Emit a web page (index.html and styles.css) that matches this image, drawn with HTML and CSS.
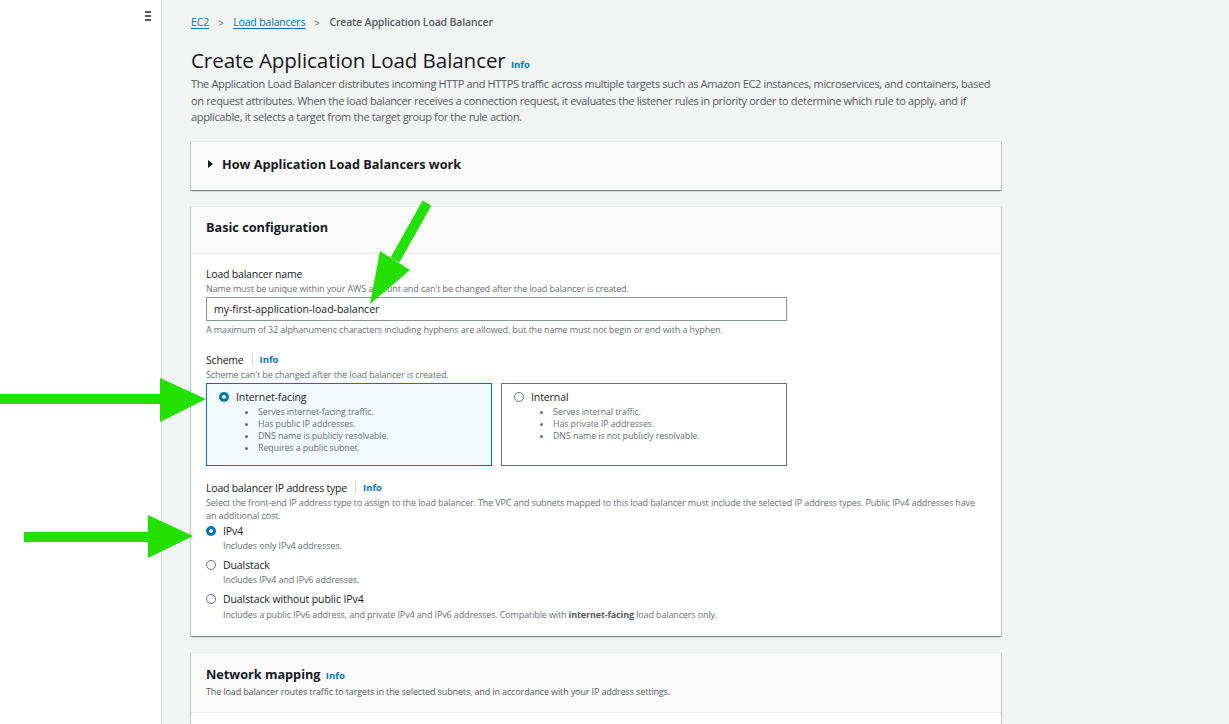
FILE: index.html
```html
<!DOCTYPE html>
<html>
<head>
<meta charset="utf-8">
<link rel="stylesheet" href="styles.css">
</head>
<body>
<div class="app">
  <aside class="sidebar">
    <div class="hamburger"><span></span><span></span><span></span></div>
  </aside>
  <main class="main">
    <nav class="crumbs">
      <a class="crumb-link">EC2</a>
      <span class="chev">&gt;</span>
      <a class="crumb-link">Load balancers</a>
      <span class="chev">&gt;</span>
      <span class="crumb-current">Create Application Load Balancer</span>
    </nav>
    <h1 class="page-title">Create Application Load Balancer <span class="info">Info</span></h1>
    <p class="page-desc">The Application Load Balancer distributes incoming HTTP and HTTPS traffic across multiple targets such as Amazon EC2 instances, microservices, and containers, based on request attributes. When the load balancer receives a connection request, it evaluates the listener rules in priority order to determine which rule to apply, and if applicable, it selects a target from the target group for the rule action.</p>

    <section class="panel panel-collapsed">
      <div class="expander"><span class="tri"></span><span>How Application Load Balancers work</span></div>
    </section>

    <section class="panel">
      <header class="panel-head"><h2>Basic configuration</h2></header>
      <div class="panel-body">
        <div class="field">
          <div class="label">Load balancer name</div>
          <div class="hint">Name must be unique within your AWS account and can't be changed after the load balancer is created.</div>
          <div class="input">my-first-application-load-balancer</div>
          <div class="hint after">A maximum of 32 alphanumeric characters including hyphens are allowed, but the name must not begin or end with a hyphen.</div>
        </div>
        <div class="field">
          <div class="label">Scheme <span class="sep"></span><span class="info">Info</span></div>
          <div class="hint">Scheme can't be changed after the load balancer is created.</div>
          <div class="tiles">
            <div class="tile selected">
              <div class="tile-title"><span class="radio on"></span>Internet-facing</div>
              <ul>
                <li>Serves internet-facing traffic.</li>
                <li>Has public IP addresses.</li>
                <li>DNS name is publicly resolvable.</li>
                <li>Requires a public subnet.</li>
              </ul>
            </div>
            <div class="tile">
              <div class="tile-title"><span class="radio"></span>Internal</div>
              <ul>
                <li>Serves internal traffic.</li>
                <li>Has private IP addresses.</li>
                <li>DNS name is not publicly resolvable.</li>
              </ul>
            </div>
          </div>
        </div>
        <div class="field">
          <div class="label">Load balancer IP address type <span class="sep"></span><span class="info">Info</span></div>
          <div class="hint wide">Select the front-end IP address type to assign to the load balancer. The VPC and subnets mapped to this load balancer must include the selected IP address types. Public IPv4 addresses have an additional cost.</div>
          <div class="radios">
            <div class="ropt">
              <span class="radio on"></span>
              <div><div class="rlabel">IPv4</div><div class="rdesc">Includes only IPv4 addresses.</div></div>
            </div>
            <div class="ropt">
              <span class="radio"></span>
              <div><div class="rlabel">Dualstack</div><div class="rdesc">Includes IPv4 and IPv6 addresses.</div></div>
            </div>
            <div class="ropt">
              <span class="radio"></span>
              <div><div class="rlabel">Dualstack without public IPv4</div><div class="rdesc">Includes a public IPv6 address, and private IPv4 and IPv6 addresses. Compatible with <b>internet-facing</b> load balancers only.</div></div>
            </div>
          </div>
        </div>
      </div>
    </section>

    <section class="panel">
      <header class="panel-head nm">
        <h2>Network mapping <span class="info">Info</span></h2>
        <div class="head-desc">The load balancer routes traffic to targets in the selected subnets, and in accordance with your IP address settings.</div>
      </header>
      <div class="panel-body tall"></div>
    </section>
  </main>
</div>

<svg class="arrow a1" width="80" height="110" viewBox="0 0 80 110">
  <line x1="69" y1="3" x2="37" y2="60" stroke="#22e000" stroke-width="10"/>
  <polygon points="12,104 22,51 52,70" fill="#22e000"/>
</svg>
<svg class="arrow a2" width="210" height="50" viewBox="0 0 210 50">
  <rect x="0" y="16" width="165" height="10" fill="#22e000"/>
  <polygon points="160,0 206,21 160,44" fill="#22e000"/>
</svg>
<svg class="arrow a3" width="200" height="50" viewBox="0 0 200 50">
  <rect x="24" y="20" width="130" height="10" fill="#22e000"/>
  <polygon points="148,3 193,24 148,46" fill="#22e000"/>
</svg>
</body>
</html>
```
FILE: styles.css
```css
* { box-sizing: border-box; }
html, body { margin: 0; padding: 0; }
body {
  font-family: "Open Sans", "Noto Sans", Arial, sans-serif;
  color: #16191f;
  background: #f2f3f3;
  width: 1229px;
  height: 724px;
  overflow: hidden;
  position: relative;
}
.app { display: flex; min-height: 724px; }
.sidebar {
  width: 162px;
  flex: none;
  background: #fff;
  border-right: 1px solid #d5dbdb;
  position: relative;
}
.hamburger {
  position: absolute;
  left: 145px;
  top: 11px;
  display: flex;
  flex-direction: column;
  gap: 2px;
}
.hamburger span { width: 6px; height: 2px; background: #545b64; display: block; }
.main {
  flex: 1;
  padding: 13px 0 0 29px;
  width: 839px;
}
.crumbs {
  display: flex;
  align-items: center;
  font-size: 10.5px;
  letter-spacing: -0.15px;
  height: 18px;
}
.crumb-link { color: #0073bb; text-decoration: underline; text-underline-offset: 2px; }
.chev { color: #545b64; margin: 0 9px; font-size: 11px; transform: scaleX(0.8); }
.crumb-current { color: #545b64; font-weight: 600; }
.page-title {
  font-size: 20.6px;
  font-weight: 400;
  margin: 15px 0 0;
  line-height: 28px;
  letter-spacing: -0.1px;
}
.info { color: #0073bb; font-size: 9.5px; font-weight: 700; letter-spacing: 0; }
.page-title .info { font-size: 9.5px; margin-left: 0; }
.page-desc {
  margin: -3px 0 0;
  width: 812px;
  font-size: 11px;
  line-height: 16.5px;
  color: #545b64;
  letter-spacing: -0.35px;
}
.panel {
  width: 810px;
  background: #fff;
  box-shadow: 0 1px 1px 0 rgba(0,28,36,0.3), 1px 1px 1px 0 rgba(0,28,36,0.15), -1px 1px 1px 0 rgba(0,28,36,0.15);
  border-top: 1px solid #eaeded;
  margin-top: 16px;
}
.panel-collapsed { margin-top: 15px; background: #fafafa; height: 49px; }
.expander {
  display: flex;
  align-items: center;
  height: 45px;
  padding-left: 17px;
  font-size: 12.7px;
  font-weight: 700;
}
.tri {
  width: 0; height: 0;
  border-left: 5px solid #16191f;
  border-top: 4px solid transparent;
  border-bottom: 4px solid transparent;
  margin-right: 9px;
}
.panel-head {
  background: #fafafa;
  border-bottom: 1px solid #eaeded;
  height: 47px;
  padding: 11px 15px 0;
}
.panel-head h2 { margin: 0; font-size: 12.7px; font-weight: 700; line-height: 18px; }
.panel-head h2 .info { margin-left: 2px; font-size: 9.5px; }
.panel-head.nm { height: 60px; padding-top: 12px; }
.head-desc { font-size: 9px; color: #545b64; margin-top: 0; letter-spacing: -0.13px; }
.panel-body { padding: 12px 15px 15px; }
.panel-body.tall { height: 40px; }
.field { margin-bottom: 16px; }
.field:nth-child(2) { margin-bottom: 14px; }
.field:last-child { margin-bottom: 0; }
.label { font-size: 10.5px; letter-spacing: -0.2px; line-height: 16px; display: flex; align-items: center; }
.sep { width: 1px; height: 13px; background: #d5dbdb; margin: 0 7px 0 8px; }
.hint { font-size: 9px; line-height: 13px; color: #687078; letter-spacing: -0.12px; }
.hint.after { margin-top: 2px; }
.hint.wide { width: 775px; }
.input {
  width: 581px;
  height: 24px;
  border: 1px solid #879596;
  margin-top: 2px;
  font-size: 10.5px;
  line-height: 22px;
  padding-left: 7px;
}
.tiles { display: flex; gap: 9px; margin-top: 2px; }
.tile {
  width: 286px;
  height: 83px;
  border: 1px solid #687078;
  padding: 6px 12px 0;
}
.tile.selected { border-color: #0073bb; background: #f1faff; }
.tile-title { font-size: 10.5px; letter-spacing: -0.1px; display: flex; align-items: center; line-height: 15px; }
.tile-title .radio { margin-right: 7px; }
.tile ul { margin: 1px 0 0; padding-left: 0; list-style: none; }
.tile li { font-size: 8.9px; line-height: 12.3px; color: #687078; padding-left: 39px; position: relative; letter-spacing: -0.1px; }
.tile li::before { content: ""; position: absolute; left: 26px; top: 5px; width: 3px; height: 3px; border-radius: 50%; background: #687078; }
.radio {
  width: 10px; height: 10px; border-radius: 50%;
  border: 1px solid #687078; background: #fff; flex: none; display: inline-block;
}
.radio.on { border: 3px solid #0073bb; }
.radios { margin-top: 1px; display: flex; flex-direction: column; gap: 5px; }
.ropt { display: flex; align-items: flex-start; }
.ropt .radio { margin-top: 3px; margin-right: 7px; }
.rlabel { font-size: 10.5px; line-height: 16px; letter-spacing: -0.1px; }
.rdesc { font-size: 9px; line-height: 13px; color: #687078; letter-spacing: -0.13px; }
.ropt:last-child .rdesc { margin-top: 1px; }
.rdesc b { color: #545b64; }
.arrow { position: absolute; }
.a1 { left: 358px; top: 200px; }
.a2 { left: 0; top: 378px; }
.a3 { left: 0; top: 512px; }
```
